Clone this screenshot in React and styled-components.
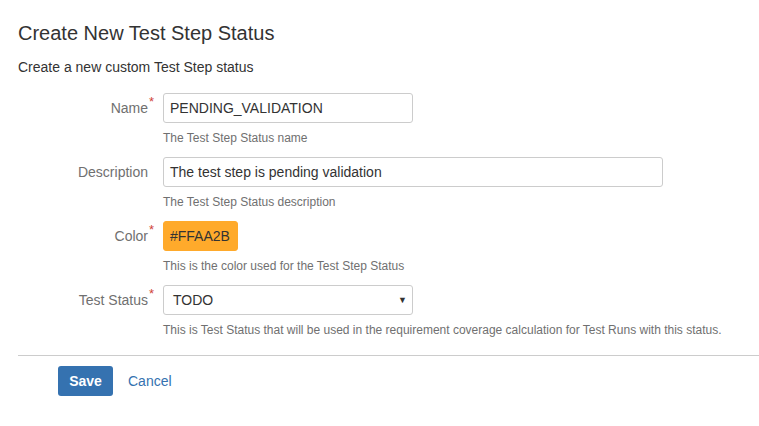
import * as React from "react";
import styled, { createGlobalStyle } from "styled-components";

const GlobalStyle = createGlobalStyle`
  body {
    margin: 0;
    background: #fff;
    font-family: "Liberation Sans", Arial, sans-serif;
    color: #333;
  }
`;

const Page = styled.div`
  padding: 21px 0 0 18px;
`;

const Title = styled.h2`
  margin: 0;
  font-size: 20px;
  line-height: 24px;
  font-weight: normal;
  color: #333;
`;

const Intro = styled.p`
  margin: 12px 0 16px;
  font-size: 14px;
  line-height: 20px;
`;

const Row = styled.div`
  display: grid;
  grid-template-columns: 130px 1fr;
  column-gap: 15px;
  margin-bottom: 11px;
`;

const Label = styled.label`
  justify-self: end;
  position: relative;
  font-size: 14px;
  line-height: 30px;
  color: #707070;
`;

const Required = styled.span`
  position: absolute;
  left: calc(100% + 1px);
  top: -6px;
  color: #d04437;
  font-size: 13px;
`;

const Field = styled.div`
  display: flex;
  flex-direction: column;
  align-items: flex-start;
`;

const Input = styled.div`
  box-sizing: border-box;
  width: ${({ $width }) => $width}px;
  height: 30px;
  padding: 0 6px;
  display: flex;
  align-items: center;
  justify-content: space-between;
  border: 1px solid ${({ $bg }) => ($bg ? $bg : "#ccc")};
  border-radius: 3px;
  background: ${({ $bg }) => $bg || "#fff"};
  font-size: 14px;
  color: #333;
`;

const Value = styled.span`
  padding-left: ${({ $indent }) => ($indent ? 3 : 0)}px;
`;

const Arrow = styled.span`
  font-size: 9px;
  color: #333;
  margin-right: -1px;
`;

const Help = styled.div`
  margin-top: 7px;
  font-size: 12px;
  line-height: 16px;
  color: #707070;
`;

const Divider = styled.hr`
  margin: 17px 0 0;
  border: 0;
  border-top: 1px solid #ccc;
`;

const Buttons = styled.div`
  display: flex;
  align-items: center;
  gap: 15px;
  padding: 10px 0 0 40px;
`;

const SaveButton = styled.button`
  width: 55px;
  height: 30px;
  border: 0;
  border-radius: 3px;
  background: #3572b0;
  color: #fff;
  font-family: inherit;
  font-size: 14px;
  font-weight: bold;
`;

const CancelLink = styled.a`
  color: #3572b0;
  font-size: 14px;
  text-decoration: none;
`;

const rows = [
  { label: "Name", required: true, value: "PENDING_VALIDATION", width: 250, help: "The Test Step Status name" },
  { label: "Description", value: "The test step is pending validation", width: 500, help: "The Test Step Status description" },
  { label: "Color", required: true, value: "#FFAA2B", width: 75, bg: "#ffaa2b", help: "This is the color used for the Test Step Status" },
  {
    label: "Test Status",
    required: true,
    value: "TODO",
    width: 250,
    select: true,
    help: "This is Test Status that will be used in the requirement coverage calculation for Test Runs with this status."
  }
];

export default function App() {
  return (
    <Page>
      <GlobalStyle />
      <Title>Create New Test Step Status</Title>
      <Intro>Create a new custom Test Step status</Intro>
      {rows.map((row) => (
        <Row key={row.label}>
          <Label>
            {row.label}
            {row.required && <Required>*</Required>}
          </Label>
          <Field>
            <Input $width={row.width} $bg={row.bg}>
              <Value $indent={row.select}>{row.value}</Value>
              {row.select && <Arrow>▼</Arrow>}
            </Input>
            <Help>{row.help}</Help>
          </Field>
        </Row>
      ))}
      <Divider />
      <Buttons>
        <SaveButton>Save</SaveButton>
        <CancelLink href="#">Cancel</CancelLink>
      </Buttons>
    </Page>
  );
}
